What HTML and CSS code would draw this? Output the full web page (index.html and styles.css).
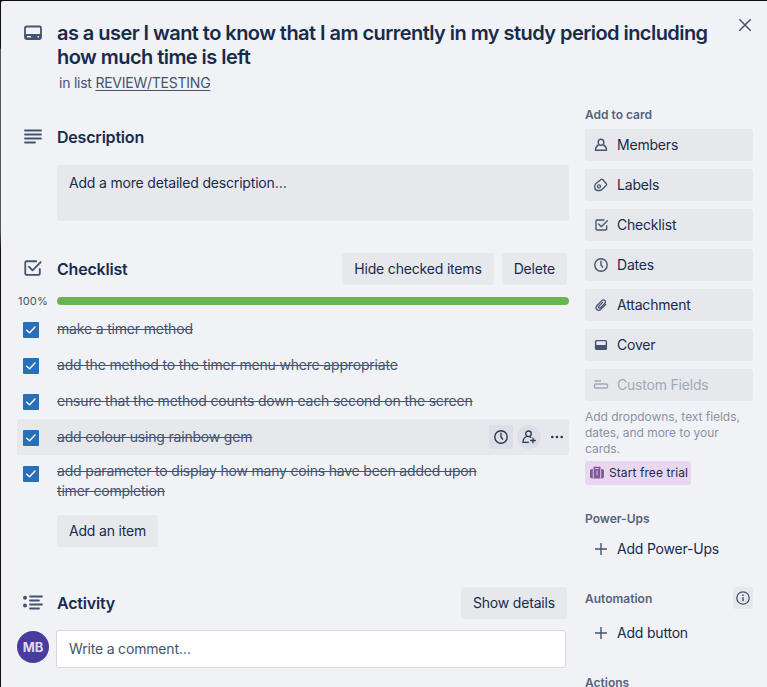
FILE: index.html
```html
<!DOCTYPE html>
<html lang="en">
<head>
<meta charset="utf-8">
<title>Card details</title>
<link rel="stylesheet" href="styles.css">
</head>
<body>
<svg class="defs" width="0" height="0">
  <symbol id="check" viewBox="0 0 24 24"><path d="M20.500 13v5a1.500 1.500 0 0 1-1.500 1.500H6A1.500 1.500 0 0 1 4.500 18V6A1.500 1.500 0 0 1 6 4.500h10.500M8.500 10.500l4 4 9-9" fill="none" stroke="currentColor" stroke-width="2" stroke-linecap="round" stroke-linejoin="round"/></symbol>
  <symbol id="clock" viewBox="0 0 16 16"><circle cx="8" cy="8" r="6.200" fill="none" stroke="currentColor" stroke-width="1.400"/><path d="M8 4.300V8l1.600 2.200" fill="none" stroke="currentColor" stroke-width="1.400" stroke-linecap="round"/></symbol>
  <symbol id="tick" viewBox="0 0 16 16"><path d="M3.700 8.200l2.900 2.500 5.400-5.700" fill="none" stroke="#fff" stroke-width="1.400" stroke-linecap="round" stroke-linejoin="round"/></symbol>
  <symbol id="plus" viewBox="0 0 16 16"><path d="M8 2v12M2 8h12" stroke="currentColor" stroke-width="1.400" fill="none"/></symbol>
</svg>
<div class="dialog">
  <header class="card-header">
    <svg class="header-icon" width="20" height="16" viewBox="0 0 20 16"><rect x="2" y="1.500" width="16" height="12.500" rx="1.500" fill="none" stroke="currentColor" stroke-width="1.800"/><path d="M2 9h16v4.500H2z" fill="currentColor"/><path d="M4 11.800h4M14.500 11.800h1.500" stroke="#f1f2f6" stroke-width="1.400"/></svg>
    <div class="title-block">
      <h1>as a user I want to know that I am currently in my study period including<br>how much time is left</h1>
      <p>in list <a>REVIEW/TESTING</a></p>
    </div>
    <svg class="close" width="16" height="16" viewBox="0 0 16 16"><path d="M2.300 2.300l11.400 11.400M13.700 2.300L2.300 13.700" stroke="currentColor" stroke-width="1.500"/></svg>
  </header>
  <div class="columns">
    <main>
      <section>
        <div class="heading description-heading">
          <svg class="section-icon" width="20" height="16" viewBox="0 0 20 16"><path d="M2 1.500h16M2 5.500h16M2 9.500h16M2 13.500h10" stroke="currentColor" stroke-width="1.800" stroke-linecap="round"/></svg>
          <h2>Description</h2>
        </div>
        <div class="description">Add a more detailed description…</div>
      </section>
      <section class="checklist">
        <div class="heading">
          <svg class="section-icon" width="20" height="20" viewBox="2 2 22 22"><use href="#check" width="24" height="24"/></svg>
          <h2>Checklist</h2>
          <button>Hide checked items</button>
          <button>Delete</button>
        </div>
        <div class="progress"><span>100%</span><div class="bar"></div></div>
        <ul>
          <li><svg class="box"><use href="#tick"/></svg><span>make a timer method</span></li>
          <li><svg class="box"><use href="#tick"/></svg><span>add the method to the timer menu where appropriate</span></li>
          <li><svg class="box"><use href="#tick"/></svg><span>ensure that the method counts down each second on the screen</span></li>
          <li class="active"><svg class="box"><use href="#tick"/></svg><span>add colour using rainbow gem</span>
            <div class="tools">
              <div class="tool"><svg width="16" height="16"><use href="#clock"/></svg></div>
              <div class="tool round"><svg width="16" height="16" viewBox="0 0 16 16"><g fill="none" stroke="currentColor" stroke-width="1.300" stroke-linecap="round"><circle cx="7.500" cy="4.800" r="2.800"/><path d="M5.500 7.500C3.500 8.400 2 10.500 2 13.300h5.500M9 8l.8.5M12 9.200v4.600M9.700 11.500h4.600"/></g></svg></div>
              <div class="tool plain"><svg width="16" height="16" viewBox="0 0 16 16"><g fill="currentColor"><circle cx="3.300" cy="8" r="1.300"/><circle cx="8" cy="8" r="1.300"/><circle cx="12.700" cy="8" r="1.300"/></g></svg></div>
            </div>
          </li>
          <li class="double"><svg class="box"><use href="#tick"/></svg><span>add parameter to display how many coins have been added upon<br>timer completion</span></li>
        </ul>
        <button class="add-item">Add an item</button>
      </section>
      <section class="activity">
        <div class="heading">
          <svg class="section-icon" width="22" height="16" viewBox="0 0 22 16"><g fill="none" stroke="currentColor" stroke-width="1.800" stroke-linecap="round"><path d="M9 1.500h12M9 5.500h9M9 9.500h12M9 13.500h9"/></g><g fill="currentColor"><circle cx="4" cy="2.800" r="2"/><circle cx="4" cy="10.600" r="2"/></g></svg>
          <h2>Activity</h2>
          <button>Show details</button>
        </div>
        <div class="comment-row"><div class="avatar">MB</div><div class="comment">Write a comment…</div></div>
      </section>
    </main>
    <aside>
      <h3>Add to card</h3>
      <nav>
        <button><svg width="16" height="16" viewBox="0 0 16 16"><g fill="none" stroke="currentColor" stroke-width="1.400" stroke-linejoin="round"><ellipse cx="8" cy="5.300" rx="2.800" ry="3.100"/><path d="M5.700 8C3.700 8.700 2.500 10.500 2.500 13.300h11c0-2.800-1.200-4.600-3.200-5.300"/></g></svg>Members</button>
        <button><svg width="16" height="16" viewBox="0 0 16 16"><g fill="none" stroke="currentColor" stroke-width="1.300" stroke-linejoin="round"><path d="M8.300 2.300L3 6.500Q1.800 7.500 1.800 9v1.500Q1.800 13.500 5 13.500H6.500Q8 13.500 9 12.500l4.300-4.200q.7-.8 0-1.600L9.700 2.500q-.7-.7-1.400-.2z"/><circle cx="6" cy="9.400" r="1.500"/></g></svg>Labels</button>
        <button><svg width="16" height="16" viewBox="0 0 24 24"><use href="#check"/></svg>Checklist</button>
        <button><svg width="16" height="16"><use href="#clock"/></svg>Dates</button>
        <button><svg width="16" height="16" viewBox="0 0 16 16"><path d="M12.800 7.400l-4.700 4.700c-1.300 1.300-3 1.700-4.300.5s-.9-3 .4-4.300l4.700-4.700c.9-.9 2.200-1 3-.2s.8 2.100-.1 3l-4.300 4.300c-.5.5-1.200.6-1.700.1s-.4-1.200.1-1.700l3.700-3.700" fill="none" stroke="currentColor" stroke-width="1.300" stroke-linecap="round"/></svg>Attachment</button>
        <button><svg width="16" height="16" viewBox="0 0 16 16"><rect x="2.600" y="3.600" width="10.800" height="8.800" rx="1" fill="none" stroke="currentColor" stroke-width="1.400"/><path d="M2.500 8h11v4.500h-11z" fill="currentColor"/></svg>Cover</button>
        <button class="disabled"><svg width="16" height="16" viewBox="0 0 16 16"><path d="M1.500 4h6.500M2.500 7h11q1 0 1 1v2q0 1-1 1h-11q-1 0-1-1V8q0-1 1-1z" fill="none" stroke="currentColor" stroke-width="1.300"/></svg>Custom Fields</button>
      </nav>
      <p class="hint">Add dropdowns, text fields,<br>dates, and more to your<br>cards.</p>
      <div class="trial"><svg width="16" height="16" viewBox="0 0 16 16"><path d="M5.200 4V2.500h5.600V4" fill="none" stroke="currentColor" stroke-width="1.400"/><rect x="1" y="4" width="14" height="9.500" rx="2" fill="currentColor"/><path d="M4.300 4v9.500M11.700 4v9.500M8 5.500v5" stroke="#e9d7f0" stroke-width=".9"/></svg>Start free trial</div>
      <h3 class="power">Power-Ups</h3>
      <button class="link"><svg width="16" height="16"><use href="#plus"/></svg>Add Power-Ups</button>
      <div class="automation"><h3>Automation</h3><div class="info"><svg width="16" height="16" viewBox="0 0 16 16"><circle cx="8" cy="8" r="6.200" fill="none" stroke="currentColor" stroke-width="1.300"/><path d="M8 7.300v3.900M8 4.600v1.400" stroke="currentColor" stroke-width="1.500"/></svg></div></div>
      <button class="link"><svg width="16" height="16"><use href="#plus"/></svg>Add button</button>
      <h3 class="actions">Actions</h3>
    </aside>
  </div>
</div>
</body>
</html>
```
FILE: styles.css
```css
* { box-sizing: border-box; margin: 0; padding: 0; }
html, body { height: 687px; overflow: hidden; }
body {
  padding: 1px 0 0 1px;
  background: linear-gradient(#100d14 0 48px, #55555a 49px 230px, #160e0e 250px);
  color: #172b4d;
  font: 14px/20px Inter, "Liberation Sans", sans-serif;
  letter-spacing: -0.18px;
}
.defs { position: absolute; }
svg { display: block; flex: none; color: #44546f; }
.dialog { height: 686px; padding: 0 14px 0 16px; background: #f1f2f6; border-top-left-radius: 2px; overflow: hidden; }
.card-header { display: flex; height: 104px; padding-top: 20px; }
.header-icon { margin: 4px 14px 0 6px; }
.title-block { flex: 1; white-space: nowrap; }
h1 { font-size: 20px; line-height: 24px; font-weight: 600; letter-spacing: -0.55px; }
.title-block p { margin: 4px 0 0 2px; color: #44546f; letter-spacing: -0.24px; }
.title-block a { text-decoration: underline; text-underline-offset: 2px; }
.close { margin: -4px 0 0; }
.columns { display: flex; gap: 16px; }
main { width: 552px; padding-top: 16px; }
.heading { display: flex; align-items: center; height: 32px; padding-right: 2px; gap: 8px; }
.heading h2 { flex: 1; margin-left: 6px; font-size: 16px; line-height: 20px; font-weight: 600; letter-spacing: -0.2px; }
.section-icon { width: 20px; margin-left: 6px; }
.activity .section-icon { width: 22px; margin: 0 0 0 4px; }
button { display: flex; align-items: center; height: 32px; padding: 0 12px; border: 0; border-radius: 3px; background: #e7e8ec; color: #172b4d; font: inherit; letter-spacing: inherit; white-space: nowrap; }
.description { height: 56px; margin: 12px 0 0 40px; padding: 8px 12px; background: #e7e8ec; border-radius: 3px; }
.checklist { margin-top: 32px; }
.progress { display: flex; align-items: center; height: 20px; margin-top: 6px; color: #44546f; font-size: 11px; letter-spacing: 0.2px; }
.progress span { width: 40px; padding-left: 1px; }
.bar { flex: 1; height: 8px; border-radius: 4px; background: #6ab44f; }
ul { list-style: none; }
li { display: flex; height: 36px; padding-top: 8px; border-radius: 3px; color: #44546f; white-space: nowrap; }
li span { text-decoration: line-through; }
.box { width: 16px; height: 16px; margin: 3px 18px 0 6px; background: #276fb8; border-radius: 1px; }
.active { background: #e7e8ec; }
.double { height: 48px; padding-top: 6px; letter-spacing: -0.2px; }
.double .box { margin-top: 5px; }
.tools { display: flex; gap: 4px; margin: -2px 0 0 auto; }
.tool { display: grid; place-items: center; width: 24px; height: 24px; border-radius: 2px; background: #dcdfe7; }
.tool svg { color: #253858; }
.round { border-radius: 50%; }
.plain { background: none; }
.add-item { margin: 12px 0 0 40px; }
.activity { margin-top: 40px; }
.comment-row { display: flex; margin-top: 11px; }
.avatar { width: 32px; height: 32px; margin: 1px 7px 0 0; border-radius: 50%; background: #4a3b9f; color: #dedbf0; font-size: 13px; line-height: 32px; font-weight: 700; letter-spacing: 0; text-align: center; }
.comment { width: 510px; height: 38px; padding: 8px 12px; border: 1px solid #d5d8df; border-radius: 3px; background: #fff; color: #44546f; }
aside { width: 168px; letter-spacing: 0; }
h3 { color: #55647c; font-size: 12px; line-height: 20px; font-weight: 600; }
nav { display: grid; gap: 8px; margin-top: 4px; }
aside button { width: 168px; padding: 0 8px; gap: 8px; letter-spacing: -0.2px; }
.disabled, .disabled svg { color: #a2a9b6; }
.hint { margin-top: 8px; color: #8a93a3; font-size: 12px; line-height: 16px; letter-spacing: -0.04px; white-space: nowrap; }
.trial { display: flex; align-items: center; gap: 4px; width: 106px; height: 24px; margin-top: 4px; padding-left: 4px; border-radius: 3px; background: #e9d7f0; font-size: 12px; letter-spacing: 0.08px; white-space: nowrap; }
.trial svg { color: #80579a; }
.power { margin-top: 24px; }
.link { margin-top: 4px; background: none; }
.automation { display: flex; justify-content: space-between; margin-top: 22px; height: 22px; }
.automation h3 { margin-top: 2px; }
.info { display: grid; place-items: center; width: 20px; height: 22px; border-radius: 3px; background: #e7e8ec; }
.automation + .link { margin-top: 8px; }
.actions { margin-top: 24px; }
```
